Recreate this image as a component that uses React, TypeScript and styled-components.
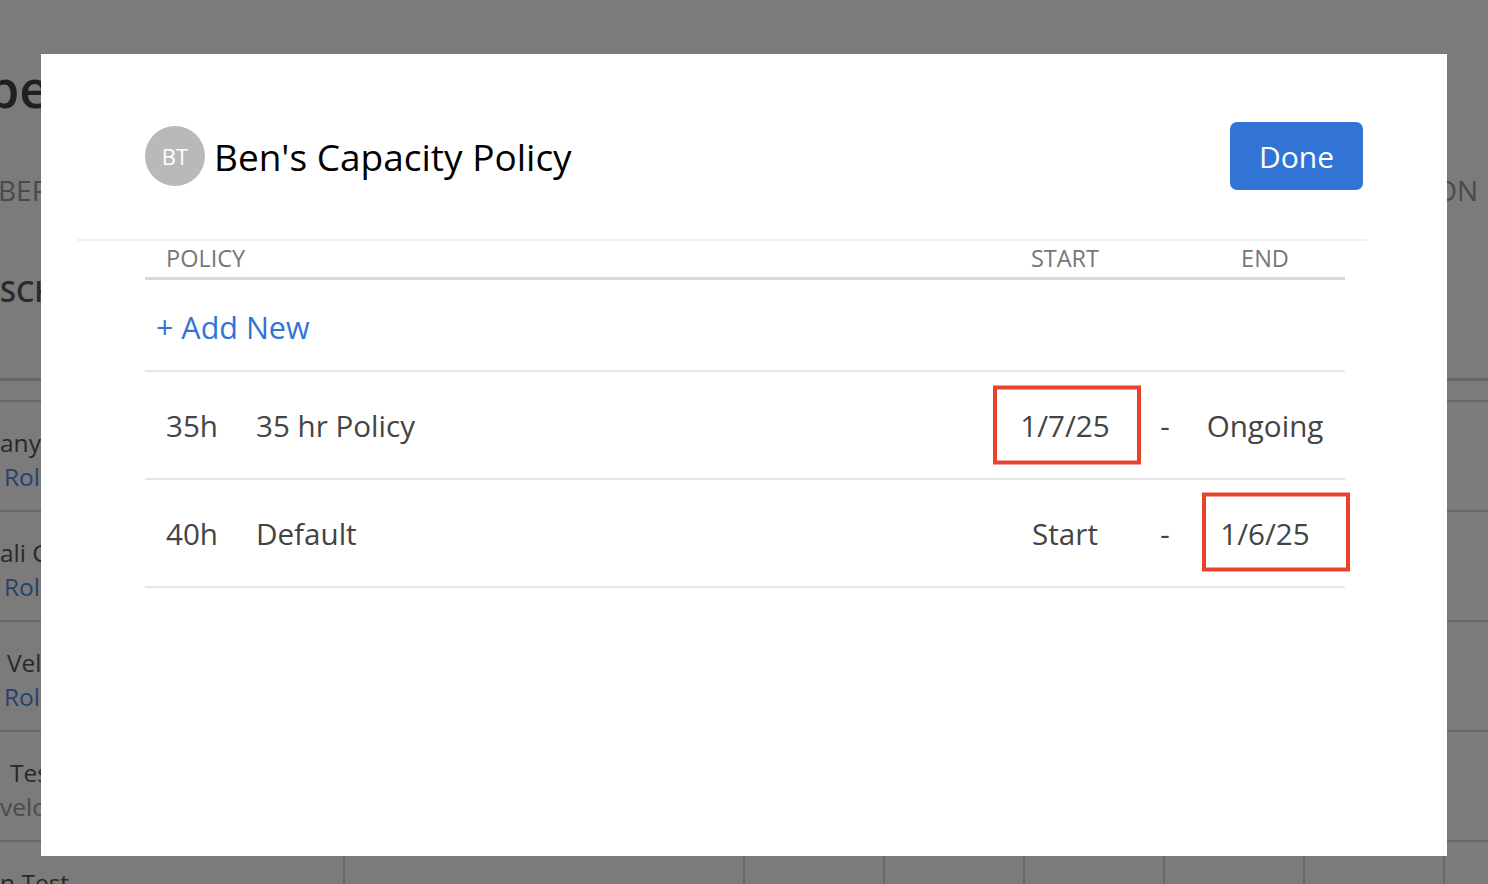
import React from 'react'
import styled, {createGlobalStyle} from 'styled-components'

const GlobalStyle = createGlobalStyle`
  html, body {
    margin: 0;
    padding: 0;
  }

  body {
    font-family: 'Open Sans', 'Noto Sans', sans-serif;
    background: #fff;
    overflow: hidden;
  }
`

/* Background page (under the overlay) */

const Page = styled.div`
  width: 1488px;
  height: 884px;
  overflow: hidden;
  color: #4c4c4c;
`

const PageTitle = styled.h1`
  box-sizing: border-box;
  height: 140px;
  margin: 0 0 0 -13px;
  padding-top: 60px;
  font-size: 52px;
  line-height: 56px;
  font-weight: 600;
  color: #444;
  white-space: nowrap;
`

const ColumnBar = styled.div`
  height: 100px;
  display: flex;
  align-items: center;
  justify-content: space-between;
  margin-left: -2px;
  padding-right: 10px;
  font-size: 28px;
  color: #9a9a9a;
  text-transform: uppercase;
  white-space: nowrap;
`

const TabBar = styled.div`
  height: 100px;
  display: flex;
  align-items: center;
  font-size: 29px;
  font-weight: 600;
  color: #575757;
  white-space: nowrap;
`

const SubHead = styled.div`
  height: 38px;
  border-bottom: 3px solid #d6d6d6;
`

const TableHead = styled.div`
  height: 19px;
  border-bottom: 2px solid #d6d6d6;
`

const PageRow = styled.div`
  height: 108px;
  display: grid;
  grid-template-columns: 343px 400px repeat(5, 140px) 1fr;
  border-bottom: 2px solid #d6d6d6;
`

const PageCell = styled.div`
  border-left: 2px solid #d6d6d6;
`

const NameCell = styled.div`
  padding-top: 24px;
  font-size: 24.5px;
  line-height: 34px;
  white-space: nowrap;
  overflow: hidden;
`

const PersonName = styled.div<{$indent: number}>`
  padding-left: ${(p) => p.$indent}px;
  color: #555;
`

const PersonRole = styled.div<{$indent: number; $muted?: boolean}>`
  padding-left: ${(p) => p.$indent}px;
  color: ${(p) => (p.$muted ? '#9c9c9c' : '#4f88dd')};
`

/* Overlay + modal */

const Overlay = styled.div`
  position: fixed;
  inset: 0;
  background: rgba(0, 0, 0, 0.518);
  display: flex;
  justify-content: center;
  align-items: flex-start;
  padding-top: 54px;
`

const Modal = styled.div`
  box-sizing: border-box;
  width: 1406px;
  height: 802px;
  background: #fff;
  padding: 68px 80px 0 36px;
`

const Header = styled.div`
  height: 68px;
  display: flex;
  align-items: center;
  justify-content: space-between;
  padding: 0 4px 0 68px;
`

const TitleGroup = styled.div`
  display: flex;
  align-items: center;
  gap: 9px;
`

const Avatar = styled.div`
  width: 60px;
  height: 60px;
  border-radius: 50%;
  background: #bab9b9;
  color: #fff;
  display: flex;
  align-items: center;
  justify-content: center;
  font-size: 22px;
  font-weight: 500;
`

const Title = styled.h2`
  margin: 0;
  font-size: 37px;
  font-weight: 400;
  color: #000;
  white-space: nowrap;
`

const DoneButton = styled.button`
  width: 133px;
  height: 68px;
  border: none;
  border-radius: 7px;
  background: #3174d6;
  color: #fff;
  font-family: inherit;
  font-size: 30px;
  cursor: pointer;
`

const Divider = styled.div`
  margin-top: 49px;
  height: 2px;
  background: #efefef;
`

const Table = styled.div`
  margin: 0 22px 0 68px;
`

const Grid = styled.div`
  display: grid;
  grid-template-columns: 111px 1fr 150px 50px 150px;
  padding-right: 5px;
  align-items: center;
`

const HeadRow = styled(Grid)`
  box-sizing: border-box;
  height: 39px;
  padding-bottom: 3px;
  border-bottom: 3px solid #d8d8d8;
  font-size: 23.5px;
  color: #777;
  text-transform: uppercase;
`

const HeadLabel = styled.div<{$span?: number}>`
  grid-column: span ${(p) => p.$span ?? 1};
  padding-left: ${(p) => (p.$span ? 21 : 0)}px;
  text-align: ${(p) => (p.$span ? 'left' : 'center')};
`

const AddRow = styled.div`
  box-sizing: border-box;
  height: 92px;
  display: flex;
  align-items: center;
  padding: 4px 0 0 11px;
  border-bottom: 2px solid #e6e6e6;
`

const AddLink = styled.a`
  font-size: 30.5px;
  color: #3174d6;
  text-decoration: none;
  cursor: pointer;
`

const DataRow = styled(Grid)`
  height: 106px;
  border-bottom: 2px solid #e6e6e6;
  font-size: 29.6px;
  color: #444;
  align-items: stretch;
`

const Cell = styled.div<{$center?: boolean}>`
  position: relative;
  display: flex;
  align-items: center;
  justify-content: ${(p) => (p.$center ? 'center' : 'flex-start')};
  padding-left: ${(p) => (p.$center ? 0 : 21)}px;
  white-space: nowrap;
`

const NameText = styled(Cell)`
  padding-left: 0;
`

const Highlight = styled.span<{$dx: number; $dy: number}>`
  position: absolute;
  left: 50%;
  top: 50%;
  width: 148px;
  height: 79px;
  box-sizing: border-box;
  border: 4px solid #e8422b;
  transform: translate(calc(-50% + ${(p) => p.$dx}px), calc(-50% + ${(p) => p.$dy}px));
  pointer-events: none;
`

type Policy = {
  hours: string
  name: string
  start: string
  end: string
  mark?: 'start' | 'end'
}

const policies: Policy[] = [
  {hours: '35h', name: '35 hr Policy', start: '1/7/25', end: 'Ongoing', mark: 'start'},
  {hours: '40h', name: 'Default', start: 'Start', end: '1/6/25', mark: 'end'},
]

const people = [
  {name: 'anya Morgan', nameIndent: 0, role: 'Roles', roleIndent: 4, muted: false},
  {name: 'ali Chen', nameIndent: 0, role: 'Roles', roleIndent: 4, muted: false},
  {name: 'Vela Ortiz', nameIndent: 7, role: 'Roles', roleIndent: 4, muted: false},
  {name: 'Test User', nameIndent: 10, role: 'veloper', roleIndent: 0, muted: true},
  {name: 'n Test', nameIndent: 0, role: '', roleIndent: 0, muted: true},
]

const App: React.FC = () => {
  return (
    <>
      <GlobalStyle />
      <Page>
        <PageTitle>pe</PageTitle>
        <ColumnBar>
          <span>BER</span>
          <span>ON</span>
        </ColumnBar>
        <TabBar>SCH</TabBar>
        <SubHead />
        <TableHead />
        {people.map((p) => (
          <PageRow key={p.name}>
            <NameCell>
              <PersonName $indent={p.nameIndent}>{p.name}</PersonName>
              <PersonRole $indent={p.roleIndent} $muted={p.muted}>
                {p.role}
              </PersonRole>
            </NameCell>
            <PageCell />
            <PageCell />
            <PageCell />
            <PageCell />
            <PageCell />
            <PageCell />
            <PageCell />
          </PageRow>
        ))}
      </Page>

      <Overlay>
        <Modal>
          <Header>
            <TitleGroup>
              <Avatar>BT</Avatar>
              <Title>Ben's Capacity Policy</Title>
            </TitleGroup>
            <DoneButton>Done</DoneButton>
          </Header>
          <Divider />
          <Table>
            <HeadRow>
              <HeadLabel $span={2}>Policy</HeadLabel>
              <HeadLabel>Start</HeadLabel>
              <div />
              <HeadLabel>End</HeadLabel>
            </HeadRow>
            <AddRow>
              <AddLink>+ Add New</AddLink>
            </AddRow>
            {policies.map((p) => (
              <DataRow key={p.name}>
                <Cell>{p.hours}</Cell>
                <NameText>{p.name}</NameText>
                <Cell $center>
                  {p.start}
                  {p.mark === 'start' && <Highlight $dx={2} $dy={0} />}
                </Cell>
                <Cell $center>-</Cell>
                <Cell $center>
                  {p.end}
                  {p.mark === 'end' && <Highlight $dx={11} $dy={-1} />}
                </Cell>
              </DataRow>
            ))}
          </Table>
        </Modal>
      </Overlay>
    </>
  )
}

export default App
